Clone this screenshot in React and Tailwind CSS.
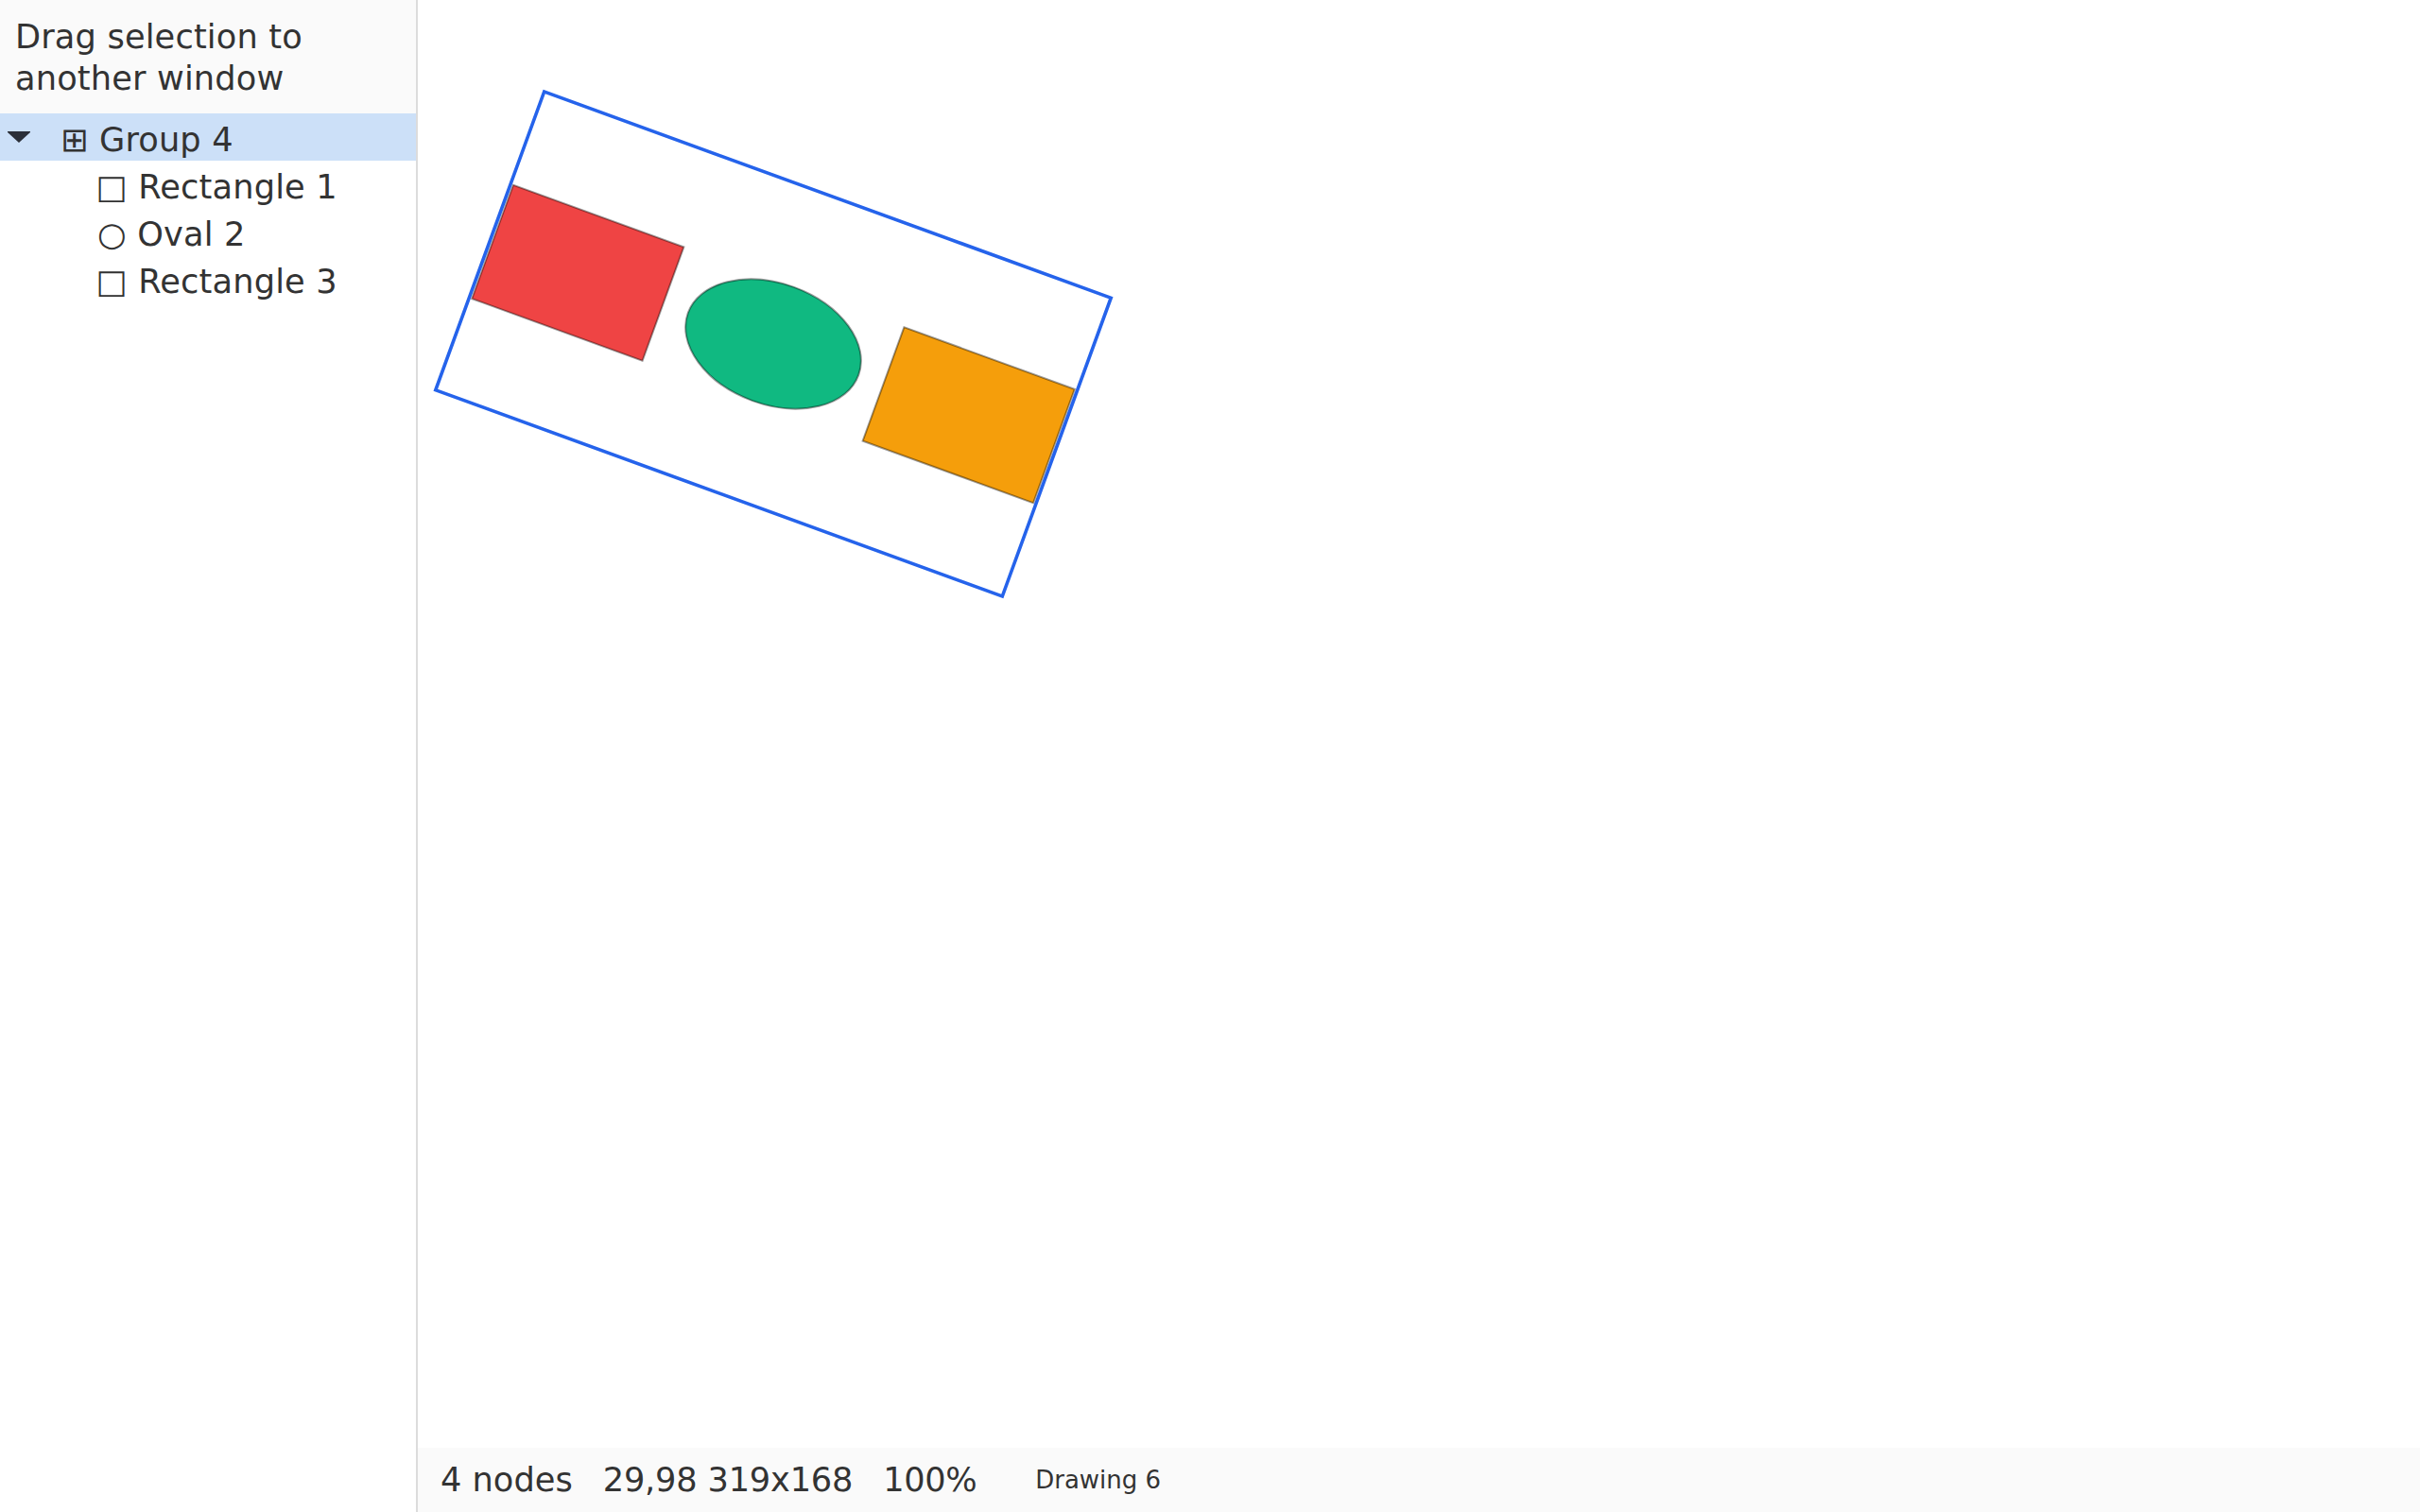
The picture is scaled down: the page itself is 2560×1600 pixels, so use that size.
const rows = [
  { label: '⊞ Group 4', indent: 'pl-[64px]', selected: true },
  { label: '□ Rectangle 1', indent: 'pl-[101.5px]' },
  { label: '○ Oval 2', indent: 'pl-[103px]' },
  { label: '□ Rectangle 3', indent: 'pl-[101.5px]' },
];

function Canvas() {
  return (
    <svg className="block w-full h-full" xmlns="http://www.w3.org/2000/svg">
      {/* the svg starts after the 442px sidebar, group centre is 818,364 on the page */}
      <g transform="translate(376 364) rotate(20)">
        <rect x="-319" y="-168" width="638" height="336" fill="none" stroke="#2563eb" strokeWidth="3.6" />
        <rect x="-316" y="-64" width="192" height="128" fill="#ef4444" stroke="#000" strokeOpacity="0.4" strokeWidth="2" />
        <ellipse cx="0" cy="0" rx="96" ry="64" fill="#10b981" stroke="#000" strokeOpacity="0.4" strokeWidth="2" />
        <rect x="124" y="-64" width="192" height="128" fill="#f59e0b" stroke="#000" strokeOpacity="0.4" strokeWidth="2" />
      </g>
    </svg>
  );
}

export default function App() {
  return (
    <div className="flex w-[2560px] h-[1600px] bg-white text-[#333333] font-['DejaVu_Sans',sans-serif] overflow-hidden">
      {/* Sidebar */}
      <div className="w-[442px] shrink-0 border-r-2 border-[#dcdcdc] flex flex-col tracking-[0.15px]">
        <div className="h-[120px] bg-[#fafafa] pl-4 pt-[17px] text-[35.2px] leading-[44px]">
          Drag selection to
          <br />
          another window
        </div>
        {rows.map((row) => (
          <div
            key={row.label}
            className={`relative h-[50px] flex items-center pt-[6px] text-[35.2px] whitespace-nowrap ${row.indent} ${row.selected ? 'bg-[#cce0f8]' : ''}`}
          >
            {row.selected && (
              <svg className="absolute left-[8px] top-[19px]" width="24" height="13" viewBox="0 0 24 13">
                <polygon points="0,0 24,0 24,1 12,12 0,1" fill="#2b2f38" />
              </svg>
            )}
            {row.label}
          </div>
        ))}
      </div>

      {/* Main */}
      <div className="flex-1 flex flex-col min-w-0">
        <div className="flex-1 min-h-0">
          <Canvas />
        </div>
        <div className="h-[68px] shrink-0 bg-[#fafafa] flex items-center pl-[24px] text-[35.2px] whitespace-nowrap">
          <span>4 nodes</span>
          <span className="ml-[32px] tracking-[-0.2px]">29,98 319x168</span>
          <span className="ml-[32px] tracking-[-0.4px]">100%</span>
          <span className="ml-[62px] text-[26px]">Drawing 6</span>
        </div>
      </div>
    </div>
  );
}
